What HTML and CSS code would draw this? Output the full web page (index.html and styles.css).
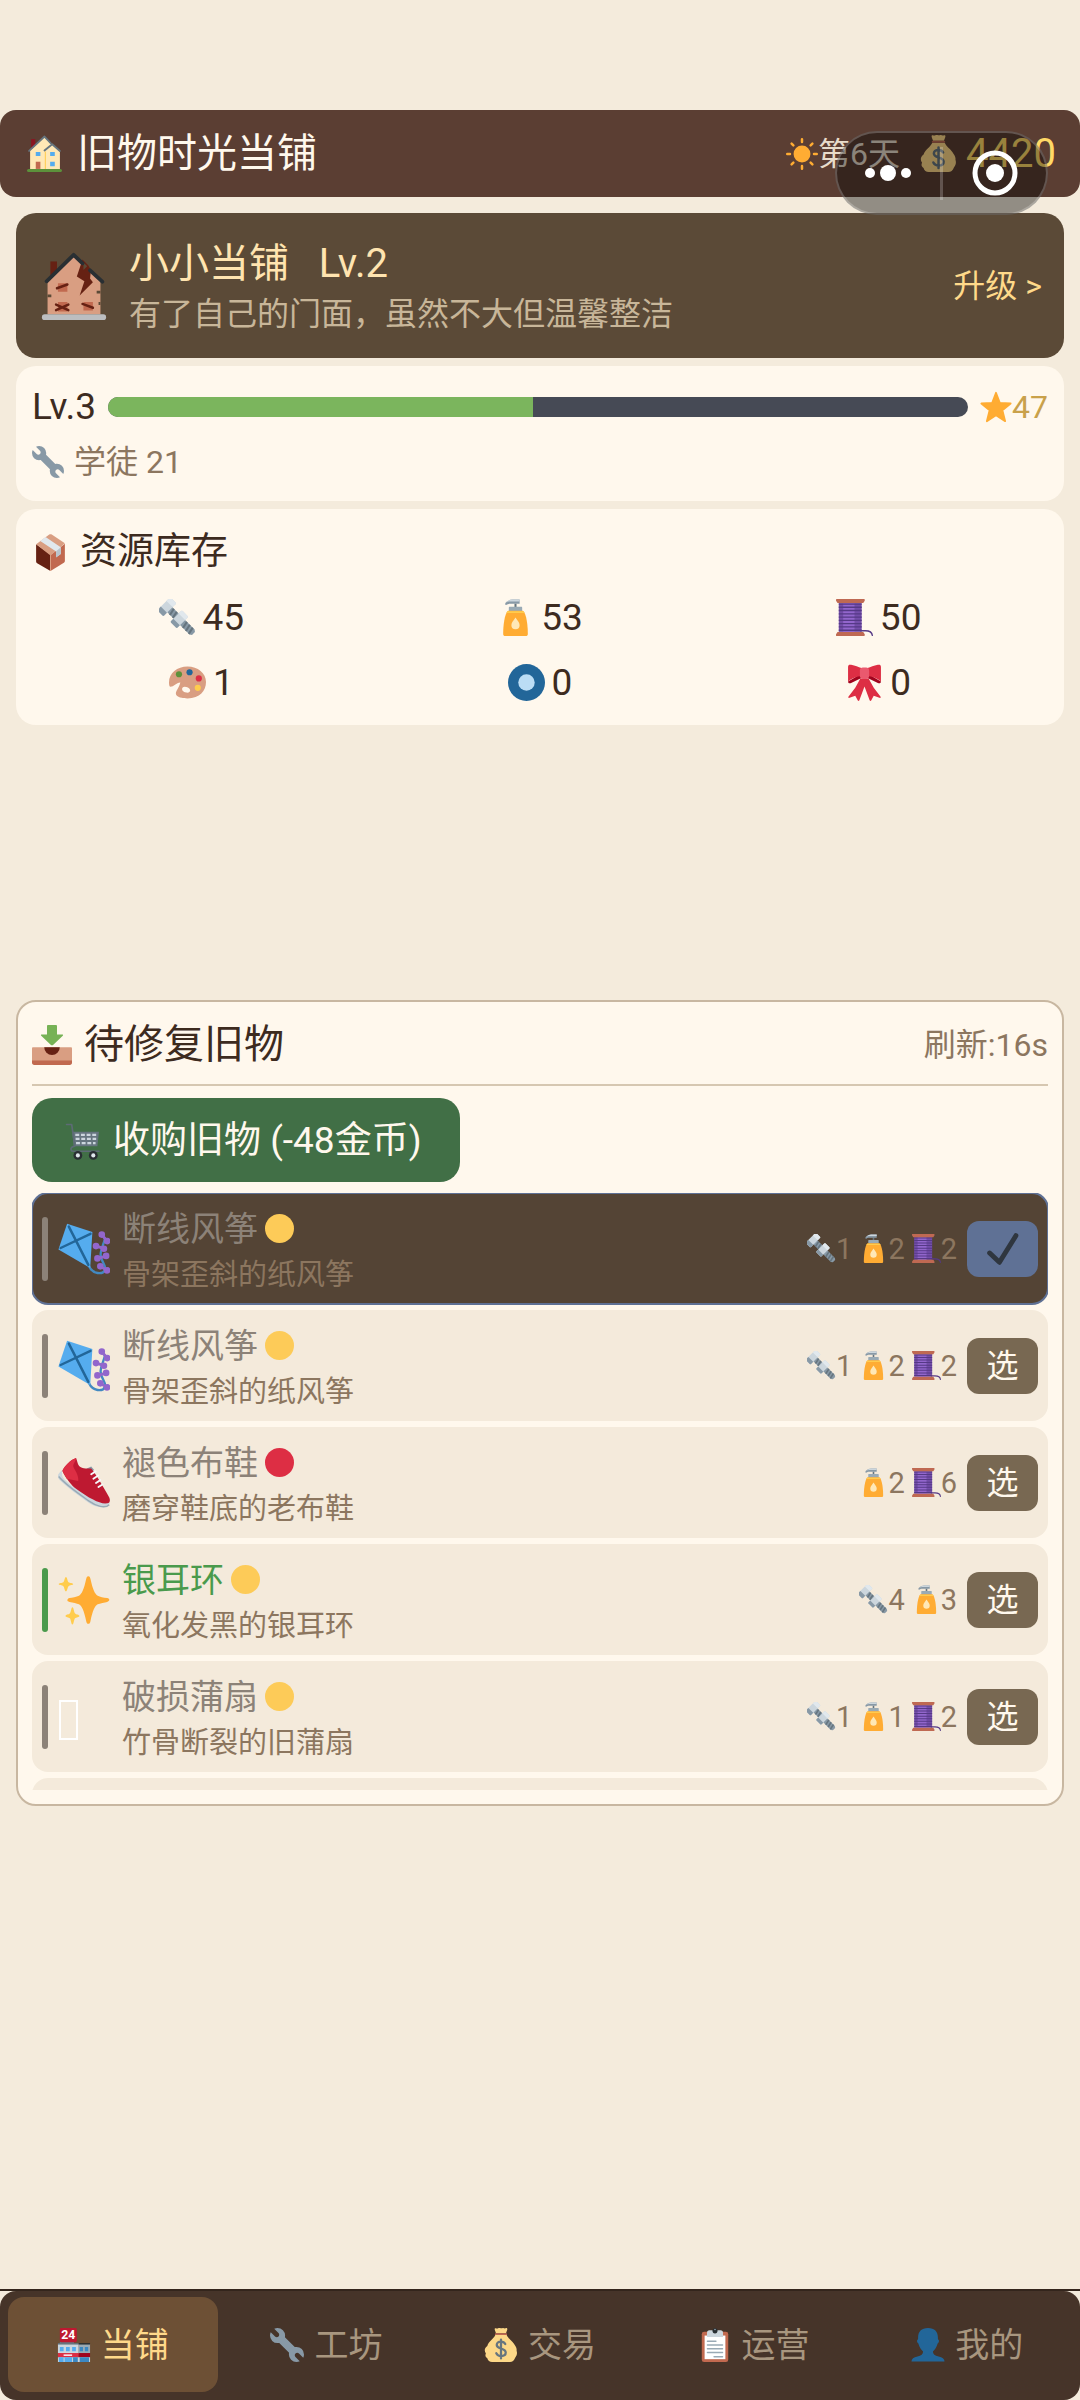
FILE: index.html
```html
<!DOCTYPE html>
<html lang="zh-CN">
<head>
<meta charset="utf-8">
<meta name="viewport" content="width=device-width, initial-scale=1">
<title>旧物时光当铺</title>
<link rel="stylesheet" href="styles.css">
</head>
<body>
<svg class="sprite" aria-hidden="true">
  <symbol id="i-home" viewBox="0 0 36 36">
    <path fill="#8a1522" d="M5 4h4v10H5z"/>
    <path fill="#ffe8b6" d="M4 15 18 2l7 7 8 7v17H4z"/>
    <path fill="none" stroke="#ffcc4d" d="M18.8 16v17"/>
    <path fill="none" stroke="#66757f" stroke-width="1.8" stroke-linecap="round" stroke-linejoin="round" d="M3 15.5 18 1.5l6 6.3M18 15l7.500-6 7.500 6.500"/>
    <path fill="#55acee" d="M9.500 16.500H14V20.500H9.500zM23.500 16.500H28V20.500H23.500zM23.500 26H28V30.500H23.500z"/>
    <path fill="#c1694f" d="M9.500 26H14v7H9.500z"/>
    <rect fill="#5c913b" x="1" y="33" width="34" height="3" rx="1.500"/>
  </symbol>
  <symbol id="i-ruin" viewBox="0 0 36 36">
    <path fill="#662113" d="M5.500 5H9v8H5.500z"/>
    <path fill="#d99e82" d="M4 15 18 2l14 13v18H4z"/>
    <path fill="#662113" d="m22.500 4-3 9 4 2.500L21 23l7-7-1.500-2 .5-4.500-1.500-2.500z"/>
    <path fill="#5b4a37" d="m23 5.500 2 2-2 2zM4 22.500h2V24H4zM30 20.500h2V22h-2zM31 26.500h1V28h-1z"/>
    <path fill="none" stroke="#292f33" stroke-width="2" stroke-linecap="round" stroke-linejoin="round" d="m3.500 15.500 14.300-14L22.500 6M26.500 9.700l6.500 6"/>
    <path fill="#c1694f" d="M9.500 16.500h5V21h-5zM9.500 26.500h5v5h-5zM23 26.500h5V31h-5z"/>
    <path fill="none" stroke="#662113" stroke-width="1.300" stroke-linecap="round" d="m9 19.200 5.500-2M8.500 27.800l6.500 3M8.500 30.800l6.500-3M22.500 27.500l5.500 2"/>
    <rect fill="#bcbec0" x="1" y="33" width="34" height="3" rx="1.500"/>
  </symbol>
  <symbol id="i-sun" viewBox="0 0 36 36">
    <circle fill="#ffac33" cx="18" cy="18" r="9.500"/>
    <path stroke="#ffac33" stroke-width="2.800" stroke-linecap="round" d="M18 1.400V4.500M18 31.500v3.100M1.400 18h3.100M31.500 18h3.100M6.300 6.300l2 2M27.700 27.700l2 2M29.700 6.300l-2 2M8.300 27.700l-2 2"/>
  </symbol>
  <symbol id="i-bag" viewBox="0 0 36 36">
    <path fill="#fdd888" d="M12 7.500h12c1.500 3.500 5 5.500 7.500 9 1.500 2.500 3.500 4.500 3 7.500 1 3 .2 5.500-1.500 7.500-1 3-3 4.500-5.500 4.500h-19C6 36 4 34.500 3.500 32 1.500 31 1 29 2 27c-2-2.500-1.500-6 1.500-8C5 14 10 12 12 7.500zM11.500.500c1-1 2 .5 3.500-.2s2-.3 3 0 1.500-.6 3 0 2.500-.8 3.500.2c.8.8-.8 3.500-1.200 5H12.700c-.4-1.500-2-4.200-1.200-5z"/>
    <path stroke="#bf6952" stroke-width="2" stroke-linecap="round" d="M12.500 6.500h11"/>
    <path fill="none" stroke="#67757f" stroke-width="2.400" stroke-linecap="round" d="M22.500 17c-1-2-2.500-2.500-4.500-2.500-3 0-4.500 1.500-4.500 3.500 0 5 9.500 2.500 9.500 8 0 2.300-2 3.700-4.800 3.700-2.500 0-4.200-.9-5.200-3M18 12.200v20"/>
  </symbol>
  <symbol id="i-star" viewBox="0 0 36 36">
    <path fill="#ffac33" stroke="#ffac33" stroke-width="2" stroke-linejoin="round" d="m18 2 4.300 11.300L34.500 14l-9.300 7.700 3.100 12.300L18 27.200 7.700 34l3.100-12.300L1.500 14l12.200-.7z"/>
  </symbol>
  <symbol id="i-wrench" viewBox="0 0 36 36">
    <path fill="#8899a6" d="M28 20c-.6 0-1.200.1-1.800.2L15.800 9.800c.1-.6.2-1.200.2-1.800a8 8 0 0 0-8-8c-1.300 0-2.400.3-3.500.8L9 5.300c1 1 1 2.700 0 3.700s-2.700 1-3.700 0L.8 4.500C.3 5.600 0 6.700 0 8a8 8 0 0 0 8 8c.6 0 1.200-.1 1.800-.2l10.400 10.400c-.1.6-.2 1.200-.2 1.800a8 8 0 0 0 8 8c1.300 0 2.400-.3 3.500-.8L27 30.700c-1-1-1-2.700 0-3.700s2.700-1 3.700 0l4.500 4.500c.5-1.100.8-2.200.8-3.500a8 8 0 0 0-8-8z"/>
  </symbol>
  <symbol id="i-box" viewBox="0 0 36 36">
    <path fill="#662113" d="m4 10 14 10v16L5 28.500c-.7-.4-1-1-1-1.700z"/>
    <path fill="#c1694f" d="m32 9.500-14 11V36l13-8c.7-.5 1-1 1-1.700z"/>
    <path fill="#d99e82" d="M16.800.500c.8-.5 1.600-.5 2.400 0L32 9 18 21 4 10z"/>
    <path stroke="#d99e82" d="M18 20.500V36"/>
    <path fill="#e1e8ed" d="m8 6.700 5.200-3.900L28 13v6.500l-4.500 3V17z"/>
    <path fill="#b8c5cd" d="M23.500 16.800 28 13v6.500l-4.500 3.400z"/>
  </symbol>
  <symbol id="i-bolt" viewBox="0 0 36 36">
    <g transform="translate(18 18) rotate(45)">
      <path fill="#8899a6" d="M-14-3.500H20l2 1.500v4l-2 1.500h-34z"/>
      <path stroke="#66757f" stroke-width="2" d="m-8.500-3.500 1.500 7M-4.500-3.500-3 3.500M9.500-3.500 11 3.500M13.500-3.500 15 3.500M17.500-3.500 19 3.500"/>
      <rect fill="#ccd6dd" x="-19" y="-9" width="8.500" height="18" rx="1.200"/>
      <path fill="#8899a6" d="M-19 4h8.500v3.800c0 .7-.5 1.200-1.200 1.200h-6.100c-.7 0-1.200-.5-1.200-1.200z"/>
      <path fill="#e1e8ed" d="M-19-7.800c0-.7.500-1.200 1.200-1.200h6.100c.7 0 1.200.5 1.200 1.200v4H-19z"/>
      <rect fill="#ccd6dd" x="-2" y="-8" width="9" height="16" rx="1.200"/>
      <path fill="#8899a6" d="M-2 3.800h9v3c0 .7-.5 1.200-1.200 1.200H-.8C-1.500 8-2 7.500-2 6.800z"/>
      <path fill="#e1e8ed" d="M-2-6.800C-2-7.500-1.500-8-.8-8h6.600C6.500-8 7-7.500 7-6.800v3.300h-9z"/>
    </g>
  </symbol>
  <symbol id="i-lotion" viewBox="0 0 36 36">
    <path fill="#66757f" d="M17 4.500h2V8h-2z"/>
    <path fill="#99aab5" d="M12.500 7.500h11c.8 0 1 .5 1 1V12h-13V8.500c0-.5.2-1 1-1z"/>
    <path fill="#8899a6" d="M22 .500v4H13c-2 0-3 .7-4.500 1.300C7.500 5 8 4 9 3c1.500-1.500 4-2.500 6-2.500z"/>
    <path fill="#ccd6dd" d="M22 .500V2.500H13c-1.500 0-3 .5-4 1 1.300-1.800 4-3 6-3z"/>
    <path fill="#ffac33" d="M11 11.500h14c2 0 5 9 5 22.500 0 1.300-.8 2-2 2H8c-1.200 0-2-.7-2-2 0-13.500 3-22.500 5-22.500z"/>
    <path fill="#ffcc4d" d="M10 12h16l.8 1.500H9.200z"/>
    <path fill="#ffe8b6" d="M18 18c2 3 4 5 4 7.500a4 4 0 0 1-8 0C14 23 16 21 18 18z"/>
  </symbol>
  <symbol id="i-spool" viewBox="0 0 36 36">
    <path fill="#744eaa" d="M2.700 4h22.300v28H2.700z"/>
    <path fill="#9266cc" d="M7 4h11v28H7z"/>
    <path stroke="#553986" stroke-width="1.300" d="M2.700 5h22.300M2.700 8h22.300M2.700 11.200h22.300M2.700 14.400h22.300M2.700 17.600h22.300M2.700 20.800h22.300M2.700 24h22.300M2.700 27.200h22.300M2.700 30.400h22.300"/>
    <path fill="none" stroke="#553986" stroke-width="1.400" stroke-linecap="round" d="M24 30.800h4.500c4 0 6.500 1 6.800 4.500"/>
    <path fill="#bf6952" d="M.8 0h26.400c1 0 1 1 .6 2l-1.300 2h-25L.200 2C-.2 1-.2 0 .8 0zM1.500 32h25l1.300 2c.4 1 .4 2-.6 2H.8c-1 0-1-1-.6-2z"/>
  </symbol>
  <symbol id="i-palette" viewBox="0 0 36 36">
    <path fill="#d99e82" fill-rule="evenodd" d="M18 2.500c10 0 18 6.500 18 15s-6 16-18 16c-4.500 0-11-1-11.300-4.500-.2-3 3.300-6 4.300-11-4 .5-6.500 4-9.500 4.200C.3 22.200 0 20 0 18 0 9 8 2.500 18 2.500zM13.300 22.800c-1.600 2 .5 4.500 3.400 5 2.700.5 4.300-1 3.800-2.800-.7-2.300-5.700-3.800-7.200-2.200z"/>
    <circle fill="#5c913b" cx="9.700" cy="10" r="3"/><circle fill="#226699" cx="20" cy="8" r="3"/>
    <circle fill="#dd2e44" cx="29" cy="14" r="3"/><circle fill="#ffcc4d" cx="28" cy="23.200" r="3"/>
  </symbol>
  <symbol id="i-disc" viewBox="0 0 36 36">
    <circle fill="#226699" cx="18" cy="18" r="18"/><circle fill="#bbddf5" cx="18" cy="18" r="8"/>
  </symbol>
  <symbol id="i-bow" viewBox="0 0 36 36">
    <path fill="#dd2e44" d="m14 14-5 9-6.500 8.500c-.8 1 0 1.700 1 1.400L9 31l2.500 4.500c.6.8 1.200.5 1.500-.3L18 22l5 13.200c.3.800.9 1.100 1.500.3L27 31l5.500 1.900c1 .3 1.800-.4 1-1.400L27 23l-5-9z"/>
    <path fill="#a0041e" d="M14 10 2 17c0 1.500 1 2 3 1.500l10-5zM22 10l12 7c0 1.500-1 2-3 1.500l-10-5z"/>
    <path fill="#dd2e44" d="M2 3C2 .5 3.500.500 5 .800 9 1.500 12 3 15 4v8c-5 0-9 2-13 5zM34 3c0-2.500-1.500-2.500-3-2.200C27 1.500 24 3 21 4v8c5 0 9 2 13 5z"/>
    <rect fill="#ea596e" x="13.500" y="3.500" width="9" height="11" rx="3"/>
  </symbol>
  <symbol id="i-inbox" viewBox="0 0 36 36">
    <path fill="#d99e82" d="M1 20h34c.6 0 1 .4 1 1v12H0V21c0-.6.4-1 1-1z"/>
    <path fill="#c1694f" d="M0 32h36v2c0 1.200-.8 2-2 2H2c-1.200 0-2-.8-2-2z"/>
    <path fill="#662113" d="M11 20h14a7 7 0 0 1-14 0z"/>
    <path fill="#77b255" d="M14.500 0h7c.6 0 1 .4 1 1v7.500h4.700c.8 0 1 .6.500 1.200l-8.500 8c-.8.8-1.600.8-2.400 0l-8.500-8c-.5-.6-.3-1.200.5-1.200h4.700V1c0-.6.4-1 1-1z"/>
  </symbol>
  <symbol id="i-cart" viewBox="0 0 36 36">
    <path fill="#66757f" d="M8 8.500h26L32.500 22.500H9.500z"/>
    <path stroke="#ccd6dd" stroke-width="2.200" stroke-dasharray="3.800 1.700" d="M11 11.500h21M11.300 15.500h20M11.700 19.500h19"/>
    <path fill="none" stroke="#5d6b75" stroke-width="1.600" stroke-linecap="round" stroke-linejoin="round" d="M2.500 1.500h5l3 21c-3 .5-4.500 2-3.500 4 .3.800 1 1 2 1h25"/>
    <circle fill="#292f33" cx="13.500" cy="31.500" r="4.300"/><circle fill="#292f33" cx="28.500" cy="31.500" r="4.300"/>
    <circle fill="#e1e8ed" cx="13.500" cy="31.500" r="2"/><circle fill="#e1e8ed" cx="28.500" cy="31.500" r="2"/>
  </symbol>
  <symbol id="i-kite" viewBox="0 0 36 36">
    <path fill="none" stroke="#4289c1" stroke-width="1.600" stroke-linecap="round" d="M21.500 30c2.500 5.500 9.500 6 11 2.500 1.200-3-3-6-3-10.500 0-4 2-7 3-11"/>
    <path fill="#55acee" d="m6.300.500 17.500 5.700-1.500 25L.300 18.300z"/>
    <path fill="none" stroke="#226699" stroke-width="1.700" stroke-linecap="round" d="M7.500 2.500 21 29M1.800 17.300 22.500 7.500"/>
    <g fill="#9266cc" stroke="#9266cc" stroke-width="2">
      <path d="m30.500 8.300 3.500 4.200M26.500 16l5 1.500M27.500 24.500l6-1.500M29.500 30l4.500 3"/>
      <circle cx="30.300" cy="8" r="1.300"/><circle cx="34" cy="12.500" r="1.300"/><circle cx="26.300" cy="16" r="1.300"/><circle cx="31.800" cy="17.800" r="1.300"/>
      <circle cx="27.300" cy="24.500" r="1.300"/><circle cx="33.300" cy="22.800" r="1.300"/><circle cx="29.300" cy="30" r="1.300"/><circle cx="34" cy="32.800" r="1.300"/>
    </g>
  </symbol>
  <symbol id="i-shoe" viewBox="0 0 36 36">
    <path fill="#8899a6" d="m20 8 3-1.500 2 2.500-3 2z"/>
    <path fill="#be1931" d="M3 9.500C5 6 8.500 2 12.500.700c1 2.300 1 4.800 3 6.300 2 1.300 5 1 7.500 1 3 3.500 8 12 12.500 20 1.300 3-.5 5.500-4.500 5.500C22 33.500 7 19 3 9.500z"/>
    <path fill="#dd2e44" d="M3 9.500C5 6 8.500 2 12.500.700c0 3-3 4-1.500 7 1.500 2.500 3.500 6 3 9L6 15z"/>
    <path fill="#ccd6dd" d="M3 9c-3 2.500-4 4-2.200 6.500 5 5 14 11.500 21 16.500 5 3.300 13 4.500 14-.5-3 1.500-7 .5-11.500-2C17 25.500 8 19 4.500 15.500 2.500 13.500 2.500 11 3 9z"/>
    <path fill="none" stroke="#99aab5" stroke-width="1" d="M.500 13.500c5 6 14 12 21 17 5 3.500 11 5.500 14 2.500"/>
    <path fill="none" stroke="#f5f8fa" stroke-width="1.300" stroke-linecap="round" d="m23 12 3-2M24.500 15l3.300-2.200M26.300 18l3-2M28 20.800l2.800-1.800"/>
  </symbol>
  <symbol id="i-sparkles" viewBox="0 0 36 36">
    <path fill="#ffac33" d="M21 1.500c1 0 1.200.8 1.500 2 1.500 7 3 10.500 5 11.500 1.500.8 4 1.200 6.500 1.700s1.500 2.200 0 2.600-5 .9-6.500 1.700c-2 1-3.500 4.500-5 11.500-.3 1.200-.5 2-1.500 2s-1.200-.8-1.500-2c-1.500-7-3-10.500-5-11.500-1.500-.8-4-1.200-6.500-1.700s-1.500-2.200 0-2.600 5-.9 6.500-1.700c2-1 3.500-4.500 5-11.500.3-1.200.5-2 1.500-2z"/>
    <path fill="#ffcc4d" d="M5.500 2c.9 0 1 3 1.800 3.700.8.600 3.200.5 3.200 1.300S8.100 7.700 7.300 8.400C6.500 9.200 6.400 12 5.500 12s-1-2.800-1.800-3.600C2.900 7.700.5 7.800.5 7s2.400-.7 3.200-1.300C4.500 5 4.600 2 5.500 2zM10 23c.9 0 1 3.500 1.800 4.300.8.7 3 .8 3 1.700s-2.200 1-3 1.700C11 31.500 10.900 35 10 35s-1-3.500-1.800-4.300c-.8-.7-3-.8-3-1.700s2.200-1 3-1.700C9 26.500 9.100 23 10 23z"/>
  </symbol>
  <symbol id="i-check" viewBox="0 0 36 36">
    <path fill="none" stroke="#2f363f" stroke-width="5.500" stroke-linecap="round" stroke-linejoin="round" d="m3 22.500 11 10.500L32.500 3"/>
  </symbol>
  <symbol id="i-clip" viewBox="0 0 36 36">
    <rect fill="#c1694f" x="4" y="4" width="28" height="32" rx="2.500"/>
    <path fill="#fff" d="M7 8h22v25H7z"/>
    <path fill="#ccd6dd" d="M12 2.500h12c1.500 0 2.500 1 2.500 2.500v4.500h-17V5c0-1.500 1-2.500 2.500-2.500z"/>
    <path fill="none" stroke="#99aab5" stroke-width="1.500" stroke-linecap="round" d="M10 14h9M10 18h16M10 22h16M10 26h16M17 30.500h9"/>
    <circle fill="#292f33" cx="18" cy="3" r="2.700"/><circle fill="#99aab5" cx="18" cy="1.500" r=".8"/>
  </symbol>
  <symbol id="i-user" viewBox="0 0 36 36">
    <path fill="#226699" d="M18 0c7 0 10.500 4 10.500 10v2c1.700.500 1.500 3.500-.3 4.500-1 4-3 6.500-5 8.500 0 3 2 4.300 6 5.300 4 1 6.300 2.500 6.300 5.200H.5c0-2.700 2.300-4.200 6.300-5.200 4-1 6-2.300 6-5.300-2-2-4-4.500-5-8.500C6 15.500 5.800 12.500 7.500 12v-2C7.500 4 11 0 18 0z"/>
  </symbol>
</svg>

<header class="topbar">
  <h1 class="topbar-title"><svg class="ico ico-l"><use href="#i-home"/></svg>旧物时光当铺</h1>
  <div class="topbar-stats">
    <span class="day"><svg class="ico ico-s"><use href="#i-sun"/></svg>第6天</span>
    <span class="coins"><svg class="ico ico-l"><use href="#i-bag"/></svg>4420</span>
  </div>
</header>

<div class="capsule">
  <button class="capsule-btn" aria-label="更多"><svg width="52" height="20" viewBox="0 0 52 20" fill="#fff"><circle cx="7" cy="10" r="5"/><circle cx="25" cy="10" r="8"/><circle cx="43" cy="10" r="5"/></svg></button>
  <button class="capsule-btn capsule-close" aria-label="关闭"><svg width="46" height="46" viewBox="0 0 46 46"><circle cx="23" cy="23" r="20" fill="none" stroke="#fff" stroke-width="5"/><circle cx="23" cy="23" r="9" fill="#fff"/></svg></button>
</div>

<main class="content">
  <section class="card shop">
    <svg class="ico shop-ico"><use href="#i-ruin"/></svg>
    <div class="shop-text">
      <h2 class="shop-name">小小当铺&nbsp;&nbsp; Lv.2</h2>
      <p class="shop-desc">有了自己的门面，虽然不大但温馨整洁</p>
    </div>
    <button class="upgrade">升级 &gt;</button>
  </section>

  <section class="card level">
    <div class="level-row">
      <span class="level-no">Lv.3</span>
      <div class="bar" role="progressbar" aria-label="经验" aria-valuenow="49" aria-valuemin="0" aria-valuemax="100"><div class="bar-fill" style="width:49.4%"></div></div>
      <span class="fame"><svg class="ico ico-s"><use href="#i-star"/></svg>47</span>
    </div>
    <div class="skill"><svg class="ico ico-s"><use href="#i-wrench"/></svg>学徒 21</div>
  </section>

  <section class="card stock">
    <h2 class="stock-title"><svg class="ico ico-l"><use href="#i-box"/></svg>资源库存</h2>
    <ul class="stock-grid">
      <li><svg class="ico ico-l"><use href="#i-bolt"/></svg>45</li>
      <li><svg class="ico ico-l"><use href="#i-lotion"/></svg>53</li>
      <li><svg class="ico ico-l"><use href="#i-spool"/></svg>50</li>
      <li><svg class="ico ico-l"><use href="#i-palette"/></svg>1</li>
      <li><svg class="ico ico-l"><use href="#i-disc"/></svg>0</li>
      <li><svg class="ico ico-l"><use href="#i-bow"/></svg>0</li>
    </ul>
  </section>

  <section class="panel">
    <div class="panel-head">
      <h2 class="panel-title"><svg class="ico ico-xl"><use href="#i-inbox"/></svg>待修复旧物</h2>
      <span class="refresh">刷新:16s</span>
    </div>
    <button class="buy"><svg class="ico ico-l"><use href="#i-cart"/></svg>收购旧物 (-48金币)</button>
    <ul class="items">
      <li class="item selected">
        <svg class="ico item-ico"><use href="#i-kite"/></svg>
        <div class="item-text"><h3 class="item-name">断线风筝<i class="dot"></i></h3><p class="item-desc">骨架歪斜的纸风筝</p></div>
        <div class="costs"><span><svg class="ico ico-xs"><use href="#i-bolt"/></svg>1</span><span><svg class="ico ico-xs"><use href="#i-lotion"/></svg>2</span><span><svg class="ico ico-xs"><use href="#i-spool"/></svg>2</span></div>
        <button class="pick" aria-label="已选"><svg class="ico ico-s"><use href="#i-check"/></svg></button>
      </li>
      <li class="item">
        <svg class="ico item-ico"><use href="#i-kite"/></svg>
        <div class="item-text"><h3 class="item-name">断线风筝<i class="dot"></i></h3><p class="item-desc">骨架歪斜的纸风筝</p></div>
        <div class="costs"><span><svg class="ico ico-xs"><use href="#i-bolt"/></svg>1</span><span><svg class="ico ico-xs"><use href="#i-lotion"/></svg>2</span><span><svg class="ico ico-xs"><use href="#i-spool"/></svg>2</span></div>
        <button class="pick">选</button>
      </li>
      <li class="item">
        <svg class="ico item-ico"><use href="#i-shoe"/></svg>
        <div class="item-text"><h3 class="item-name">褪色布鞋<i class="dot dot-red"></i></h3><p class="item-desc">磨穿鞋底的老布鞋</p></div>
        <div class="costs"><span><svg class="ico ico-xs"><use href="#i-lotion"/></svg>2</span><span><svg class="ico ico-xs"><use href="#i-spool"/></svg>6</span></div>
        <button class="pick">选</button>
      </li>
      <li class="item fine">
        <svg class="ico item-ico"><use href="#i-sparkles"/></svg>
        <div class="item-text"><h3 class="item-name">银耳环<i class="dot"></i></h3><p class="item-desc">氧化发黑的银耳环</p></div>
        <div class="costs"><span><svg class="ico ico-xs"><use href="#i-bolt"/></svg>4</span><span><svg class="ico ico-xs"><use href="#i-lotion"/></svg>3</span></div>
        <button class="pick">选</button>
      </li>
      <li class="item">
        <span class="item-ico no-glyph"></span>
        <div class="item-text"><h3 class="item-name">破损蒲扇<i class="dot"></i></h3><p class="item-desc">竹骨断裂的旧蒲扇</p></div>
        <div class="costs"><span><svg class="ico ico-xs"><use href="#i-bolt"/></svg>1</span><span><svg class="ico ico-xs"><use href="#i-lotion"/></svg>1</span><span><svg class="ico ico-xs"><use href="#i-spool"/></svg>2</span></div>
        <button class="pick">选</button>
      </li>
      <li class="item"></li>
    </ul>
  </section>
</main>

<div class="tabbar">
  <nav class="tabs">
    <button class="tab active">
      <svg class="ico ico-m" viewBox="0 0 36 36">
        <path fill="#66757f" d="M3 14.500h15V17H3z"/>
        <path fill="#ccd6dd" d="M1 17h22v10H1z"/><path fill="#99aab5" d="M23 17h12v10H23z"/>
        <path fill="#66757f" d="M1 16h22v1.500H1z"/><path fill="#292f33" d="M23 16h12v1.500H23z"/>
        <path fill="#55acee" d="M3 20h4v4.500H3zM9.500 20h4v4.500h-4zM16 20h4v4.500h-4z"/><path fill="#3b88c3" d="M24 20h3.500v4.500H24zM29.500 20H33v4.500h-3.500z"/>
        <path fill="#dd2e44" d="M1 26.500h22V31H1z"/><path fill="#a0041e" d="M23 26.500h12V31H23z"/>
        <path fill="#ccd6dd" d="M1 31h34v5H1z"/><path fill="#55acee" d="M2 31h5v5H2zM8 31h8v5H8z"/><path fill="#3b88c3" d="M17 31h5v5h-5zM24 31h10v5H24z"/>
        <path fill="#fff" d="M7 28h9v1.500H7z"/>
        <rect fill="#be1931" x="3" width="18" height="15" rx="1.500"/>
        <text x="12" y="12" fill="#fff" font-size="13" font-weight="700" text-anchor="middle">24</text>
      </svg>当铺</button>
    <button class="tab"><svg class="ico ico-m"><use href="#i-wrench"/></svg>工坊</button>
    <button class="tab"><svg class="ico ico-m"><use href="#i-bag"/></svg>交易</button>
    <button class="tab"><svg class="ico ico-m"><use href="#i-clip"/></svg>运营</button>
    <button class="tab"><svg class="ico ico-m"><use href="#i-user"/></svg>我的</button>
  </nav>
</div>
</body>
</html>
```

FILE: styles.css
```css
:root {
  --page: #f4ebdc;
  --card: #fff8ed;
  --ink: #3d2b1f;
  --muted: #8c765f;
  --gold: #ffd98a;
}

* { box-sizing: border-box; margin: 0; padding: 0; }

body {
  position: relative;
  display: flex;
  flex-direction: column;
  min-height: 100vh;
  padding-top: 110px;
  background: var(--page);
  color: var(--ink);
  font-family: Roboto, "Noto Sans CJK SC", sans-serif;
  font-size: 32px;
  line-height: 44px;
}

h1, h2, h3 { font-weight: 400; }
ul { list-style: none; }
button { border: 0; background: none; color: inherit; font: inherit; cursor: pointer; }

.sprite { position: absolute; width: 0; height: 0; }
.ico { flex: none; display: block; }
.ico-xs { width: 29px; height: 29px; }
.ico-s { width: 32px; height: 32px; }
.ico-m { width: 34px; height: 34px; }
.ico-l { width: 37px; height: 37px; }
.ico-xl { width: 40px; height: 40px; }

/* top bar */
.topbar {
  display: flex;
  align-items: center;
  justify-content: space-between;
  min-height: 87px;
  padding: 0 24px 0 26px;
  border-radius: 16px;
  background: #5b3e33;
}
.topbar-title { display: flex; align-items: center; gap: 14px; color: #fff8ed; font-size: 40px; }
.topbar-stats { display: flex; align-items: center; gap: 20px; }
.day { display: flex; align-items: center; color: #e8dccb; }
.coins { display: flex; align-items: center; gap: 9px; color: #ffd966; font-size: 40px; }

/* host app capsule, floats above the page */
.capsule {
  position: absolute;
  top: 131px;
  right: 32px;
  display: flex;
  align-items: center;
  width: 213px;
  height: 84px;
  border: 2px solid rgba(255, 255, 255, .22);
  border-radius: 42px;
  background: rgba(0, 0, 0, .4);
}
.capsule-btn { display: flex; flex: 1; align-items: center; justify-content: center; height: 53px; }
.capsule-close { border-left: 3px solid rgba(255, 255, 255, .22); }

/* cards */
.content { display: flex; flex-direction: column; gap: 8px; padding: 16px 16px 0; }
.card { padding: 0 16px; border-radius: 20px; background: var(--card); }

.shop {
  display: flex;
  align-items: center;
  gap: 21px;
  min-height: 145px;
  padding: 0 22px 0 24px;
  background: #5b4a37;
}
.shop-ico { width: 68px; height: 68px; }
.shop-text { flex: 1; padding-top: 6px; line-height: 50px; }
.shop-name { color: #ffe4b0; font-size: 40px; }
.shop-desc { color: #c8b699; }
.upgrade { color: var(--gold); }

.level { display: flex; flex-direction: column; gap: 11px; padding-top: 19px; padding-bottom: 17px; }
.level-row { display: flex; align-items: center; gap: 12px; }
.level-no { font-size: 37px; }
.bar { flex: 1; height: 20px; overflow: hidden; border-radius: 10px; background: #464a55; }
.bar-fill { height: 100%; background: #7bb55d; }
.fame { display: flex; align-items: center; color: #c9a14a; }
.skill { display: flex; align-items: center; gap: 10px; color: var(--muted); }

.stock { padding-top: 17px; padding-bottom: 10px; }
.stock-title { display: flex; align-items: center; gap: 11px; font-size: 37px; line-height: 52px; }
.stock-grid { display: grid; grid-template-columns: repeat(3, 1fr); padding-top: 7px; font-size: 37px; }
.stock-grid li { display: flex; align-items: center; justify-content: center; gap: 7px; height: 65px; }

/* repair queue */
.panel {
  margin-top: 267px;
  padding: 0 14px 14px;
  border: 2px solid #c8b7a1;
  border-radius: 20px;
  background: var(--card);
}
.panel-head {
  display: flex;
  align-items: center;
  justify-content: space-between;
  min-height: 84px;
  padding-top: 3px;
  border-bottom: 2px solid #d6c7b1;
}
.panel-title { display: flex; align-items: center; gap: 12px; font-size: 40px; }
.refresh { color: var(--muted); }
.buy {
  display: flex;
  align-items: center;
  gap: 12px;
  height: 84px;
  margin: 12px 0 11px;
  padding: 2px 38px 0 32px;
  border-radius: 20px;
  background: #416f46;
  color: #fff8ed;
  font-size: 37px;
}

.items {
  display: flex;
  flex-direction: column;
  gap: 6px;
  max-height: 597px;
  overflow-y: auto;
  scrollbar-width: none;
}
.item {
  display: flex;
  flex: none;
  align-items: center;
  gap: 10px;
  min-height: 111px;
  padding: 0 10px;
  border-radius: 16px;
  background: #f4eadb;
}
.item::before { content: ""; width: 6px; height: 64px; border-radius: 3px; background: #8c8278; }
.item-ico { width: 52px; height: 52px; }
.item-text { flex: 1; padding: 6px 0 0 2px; line-height: 46px; }
.item-name { display: flex; align-items: center; gap: 7px; color: #8c8278; font-size: 34px; }
.item-desc { color: var(--muted); font-size: 29px; }
.dot { width: 29px; height: 29px; border-radius: 50%; background: #fdcb58; }
.dot-red { background: #dd2e44; }
.costs { display: flex; gap: 7px; color: var(--muted); font-size: 29px; }
.costs span { display: flex; align-items: center; }
.pick {
  display: flex;
  align-items: center;
  justify-content: center;
  width: 71px;
  height: 56px;
  border-radius: 12px;
  background: #786852;
  color: #fff8ed;
}
.selected { outline: 2px solid #5f7195; outline-offset: -1px; background: #544435; }
.selected .pick { background: #5f7195; }
.fine::before { background: #4a9a4c; }
.fine .item-name { color: #4a9a4c; }
.no-glyph::before { content: ""; display: block; width: 15px; height: 36px; margin: 9px 1px; border: 2px solid #fff; }

/* bottom tabs */
.tabbar { margin-top: auto; border-top: 2px solid #33251c; }
.tabs { display: flex; gap: 4px; padding: 6px 8px 8px; border-radius: 16px; background: #463429; }
.tab {
  display: flex;
  flex: 1;
  align-items: center;
  justify-content: center;
  gap: 10px;
  height: 95px;
  border-radius: 16px;
  color: #a8967f;
  font-size: 34px;
}
.active { background: #6d5035; color: var(--gold); }
```
